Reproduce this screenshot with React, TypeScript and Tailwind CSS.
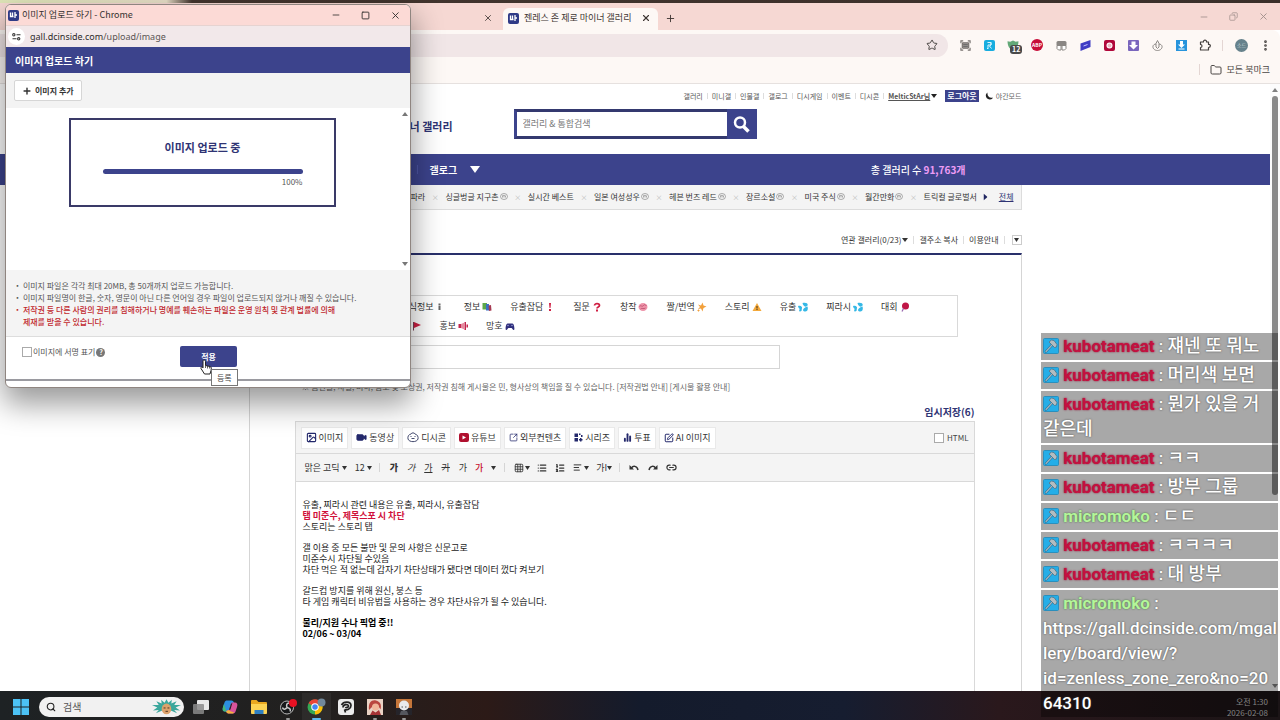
import type { ReactNode } from 'react';
import {
  ChartNoAxesColumn,
  Copy,
  EllipsisVertical,
  Folder,
  Grid3x3,
  Image as ImageIcon,
  Link2,
  List,
  ListOrdered,
  Minus,
  Plus,
  Search,
  Square,
  SquareArrowOutUpRight,
  SquarePen,
  Star,
  TextAlignStart,
  Video,
  X,
} from 'lucide-react';

type EmojiName =
  | 'info'
  | 'books'
  | 'exclaim'
  | 'question'
  | 'brain'
  | 'sparkles'
  | 'warning'
  | 'drops'
  | 'paddle'
  | 'flag'
  | 'megaphone'
  | 'gamepad';

const UTIL_LINKS = ['갤러리', '미니갤', '인물갤', '갤로그', '디시게임', '이벤트', '디시콘'];

const RECENT = [
  { name: '싱글벙글 지구촌', minor: true },
  { name: '실시간 베스트', minor: false },
  { name: '일본 여성성우', minor: true },
  { name: '헤븐 번즈 레드', minor: true },
  { name: '장르소설', minor: true },
  { name: '미국 주식', minor: true },
  { name: '월간만화', minor: true },
];

const CATEGORIES: { label: string; icon: EmojiName }[] = [
  { label: '소식정보', icon: 'info' },
  { label: '정보', icon: 'books' },
  { label: '유출잡담', icon: 'exclaim' },
  { label: '질문', icon: 'question' },
  { label: '창작', icon: 'brain' },
  { label: '짤/번역', icon: 'sparkles' },
  { label: '스토리', icon: 'warning' },
  { label: '유출', icon: 'drops' },
  { label: '찌라시', icon: 'drops' },
  { label: '대회', icon: 'paddle' },
];

const CHAT = [
  { user: 'kubotameat', text: '쟤넨 또 뭐노' },
  { user: 'kubotameat', text: '머리색 보면' },
  { user: 'kubotameat', text: '뭔가 있을 거 같은데' },
  { user: 'kubotameat', text: 'ㅋㅋ' },
  { user: 'kubotameat', text: '방부 그룹' },
  { user: 'micromoko', text: 'ㄷㄷ' },
  { user: 'kubotameat', text: 'ㅋㅋㅋㅋ' },
  { user: 'kubotameat', text: '대 방부' },
  { user: 'micromoko', text: 'https://gall.dcinside.com/mgallery/board/view/?id=zenless_zone_zero&no=20\n64310' },
];

function Caret({ className = 'w-[5px] h-[4px]' }: { className?: string }) {
  return (
    <svg viewBox="0 0 10 7" preserveAspectRatio="none" className={`shrink-0 ${className}`}>
      <path d="M0 0h10L5 7z" fill="currentColor" />
    </svg>
  );
}

function Favicon() {
  return (
    <svg viewBox="0 0 22 22" className="w-[11px] h-[11px] shrink-0">
      <rect width="22" height="22" rx="4" fill="#2f3a86" />
      <path d="M5 5v8h6M9 5v9M14 4v12M14 10h4" fill="none" stroke="#fff" strokeWidth="2.6" />
    </svg>
  );
}

function Emoji({ name }: { name: EmojiName }) {
  const shapes: Record<EmojiName, ReactNode> = {
    info: <path d="M5 7h4v9H5zM5 3h4v3H5z" fill="#666" />,
    books: (
      <>
        <rect x="1" y="2" width="9" height="13" fill="#5da84a" />
        <rect x="8" y="4" width="6" height="13" fill="#3b6fc4" />
        <path d="M13 7l5-1 1 11-5 1z" fill="#a63a52" />
      </>
    ),
    exclaim: <path d="M8 2h4l-1 10H9zM8 14h4v4H8z" fill="#cf1f43" />,
    question: (
      <>
        <path d="M5 7c0-5 10-5 10 0 0 3-5 3-5 6" fill="none" stroke="#cf1f43" strokeWidth="3.4" />
        <path d="M8 15h4v4H8z" fill="#cf1f43" />
      </>
    ),
    brain: (
      <>
        <ellipse cx="10" cy="10" rx="9" ry="8" fill="#ee93a9" />
        <path d="M3 9c3-4 5 2 8-2s4 1 6 0M5 14c3-3 6 1 10-2" fill="none" stroke="#b94a68" strokeWidth="1.6" />
      </>
    ),
    sparkles: (
      <path d="M11 1l2 6 6 2-6 3-2 7-3-6-6 1 4-4-4-5 6 2zM3 14l1 2 2 1-2 1-1 2-1-2-2-1 2-1z" fill="#f2a03c" />
    ),
    warning: (
      <>
        <path d="M10 2l9 16H1z" fill="#f3a93b" />
        <path d="M9 8h2v5H9zM9 14h2v2H9z" fill="#43301a" />
      </>
    ),
    drops: (
      <g fill="#35b8e6">
        <path d="M9 2c7-2 12 1 10 5s-8 3-10-5z" />
        <path d="M0 8c6-2 9 2 8 5s-7 2-8-5z" />
        <path d="M19 9c2 7-1 11-6 10s-4-7 6-10z" />
        <path d="M3 19c-2-4 0-5 3-5s2 5-3 5z" />
      </g>
    ),
    paddle: (
      <>
        <circle cx="11" cy="8" r="7" fill="#c01646" />
        <path d="M7 13l-3 6" stroke="#9b6ab1" strokeWidth="2.6" />
      </>
    ),
    flag: (
      <>
        <path d="M3 2v17" stroke="#7a3d52" strokeWidth="2" />
        <path d="M4 2l14 6-14 6z" fill="#cf1f43" />
      </>
    ),
    megaphone: (
      <>
        <path d="M1 6h5v8H1zM13 2h3v16h-3z" fill="#c2274e" />
        <path d="M6 6l7-3v14l-7-3z" fill="#e58a9f" />
        <path d="M17 7h3v6h-3z" fill="#c2274e" />
      </>
    ),
    gamepad: (
      <>
        <path d="M5 5h10c3 0 5 12 3 13s-4-4-5-4H7c-1 0-3 5-5 4S2 5 5 5z" fill="#2f2f7d" />
        <circle cx="6" cy="9" r="1.5" fill="#9aa0d8" />
        <circle cx="14" cy="9" r="1.5" fill="#9aa0d8" />
      </>
    ),
  };
  return (
    <svg viewBox="0 0 20 20" className="w-[10px] h-[10px] shrink-0">
      {shapes[name]}
    </svg>
  );
}

function ExtensionIcons() {
  return (
    <div className="flex items-center text-[#4a4644]">
      <span className="flex w-6 justify-center">
        <svg viewBox="0 0 24 24" className="w-[11px] h-[11px]" fill="none" stroke="#77726f" strokeWidth="2.5">
          <path d="M2 7V2h5M17 2h5v5M22 17v5h-5M7 22H2v-5" />
          <rect x="5" y="6" width="14" height="12" rx="2" fill="#9a9693" />
          <path d="M7 10h10M7 14h10" stroke="#666" strokeWidth="2" />
        </svg>
      </span>
      <span className="flex w-6 justify-center">
        <svg viewBox="0 0 22 22" className="w-[11px] h-[11px]">
          <rect width="22" height="22" rx="4" fill="#18addf" />
          <path d="M7 5h7v5H8v6M14 5v5l-3 2 4 5M6 17h3" fill="none" stroke="#d9f5ff" strokeWidth="2" />
        </svg>
      </span>
      <span className="relative flex w-6 justify-center">
        <svg viewBox="0 0 22 20" className="w-[12px] h-[11px]">
          <path d="M1 2l5 1 5-2 5 2 5-1c0 8-3 14-10 17C4 16 1 10 1 2z" fill="#63a878" />
        </svg>
        <span className="absolute left-[9px] top-[5px] rounded-[3px] bg-[#4a4a4a] px-[2px] text-[7px] leading-[9px] font-bold text-white">
          12
        </span>
      </span>
      <span className="flex w-6 justify-center">
        <span className="flex w-[12px] h-[12px] items-center justify-center rounded-full bg-[#c70d38] text-[5px] font-bold text-white">
          ABP
        </span>
      </span>
      <span className="flex w-6 justify-center">
        <svg viewBox="0 0 22 22" className="w-[11px] h-[11px]">
          <rect x="1" y="2" width="20" height="10" rx="3" fill="#8a8683" />
          <path d="M2 11h8v9H5l-3-3zM12 11h8v6l-3 3h-5z" fill="#fff" stroke="#8a8683" strokeWidth="2" />
        </svg>
      </span>
      <span className="flex w-6 justify-center">
        <svg viewBox="0 0 22 22" className="w-[11px] h-[11px]">
          <path d="M1 7L21 0v14L1 22z" fill="#3f3cc4" />
          <path d="M7 12l8-3" stroke="#c9c8ff" strokeWidth="2" />
        </svg>
      </span>
      <span className="flex w-6 justify-center">
        <svg viewBox="0 0 22 22" className="w-[11px] h-[11px]">
          <rect width="22" height="22" rx="4" fill="#b0083a" />
          <circle cx="11" cy="11" r="6" fill="#fff" />
          <circle cx="11" cy="11" r="4" fill="#f0b6c4" />
        </svg>
      </span>
      <span className="flex w-6 justify-center">
        <svg viewBox="0 0 22 22" className="w-[11px] h-[11px]">
          <rect width="22" height="22" rx="2" fill="#7a66bd" />
          <path d="M7 3h8v7h5l-9 9-9-9h5z" fill="#fff" />
        </svg>
      </span>
      <span className="flex w-6 justify-center">
        <svg viewBox="0 0 22 22" className="w-[11px] h-[11px]" fill="none" stroke="#8c8885" strokeWidth="2">
          <path d="M11 1l3 6M11 1L8 7v7l3 3 3-3V7M8 8c-10 1-7 13 3 13S24 9 14 8" />
        </svg>
      </span>
      <span className="flex w-6 justify-center">
        <svg viewBox="0 0 22 22" className="w-[11px] h-[11px]">
          <rect width="22" height="22" fill="#2794dc" />
          <path d="M8 2h6v7h4l-7 7-7-7h4zM5 17h12v2H5z" fill="#fff" />
        </svg>
      </span>
      <span className="flex w-6 justify-center">
        <svg viewBox="0 0 24 24" className="w-[12px] h-[12px]" fill="none" stroke="#45413f" strokeWidth="2.4">
          <path d="M3 6h6c-1-5 7-5 6 0h4v5c5-1 5 6 0 6v5H3v-5c4 0 4-6 0-6z" strokeLinejoin="round" />
        </svg>
      </span>
      <span className="mx-[5px] h-[11px] w-px bg-[#e4d6d3]" />
      <span className="ml-[7px] flex w-[13px] h-[13px] items-center justify-center rounded-full bg-[#66828c] text-[5px] text-[#c9d8dd]">
        소드
      </span>
      <span className="ml-[11px] mr-2">
        <EllipsisVertical className="w-[13px] h-[13px]" strokeWidth={3} />
      </span>
    </div>
  );
}

function BrowserChrome() {
  return (
    <header className="shrink-0">
      <div className="h-[3px] bg-[linear-gradient(90deg,#dfe6b8_0%,#e8dfc8_13%,#43352e_15%,#3a2f2a_100%)]" />
      <div className="flex h-[27px] items-end bg-[#f6d8d3] text-[#3d3532]">
        <div className="flex h-[22px] w-[503px] items-center justify-end pr-[10px] pb-[2px]">
          <X className="w-[10px] h-[10px]" />
        </div>
        <div className="flex h-[22px] w-[155px] items-center rounded-t-[6px] bg-[#fdf8f5] pl-[5px] pr-[7px] pb-[2px]">
          <Favicon />
          <span className="ml-[5px] flex-1 whitespace-nowrap text-[9px]">젠레스 존 제로 마이너 갤러리</span>
          <X className="w-[10px] h-[10px]" strokeWidth={2.6} />
        </div>
        <div className="flex h-[22px] flex-1 items-center pl-[7px] pb-[2px]">
          <Plus className="w-[11px] h-[11px]" />
        </div>
        <div className="flex h-[27px] items-center gap-[20px] pr-[11px] text-[#a08f8b]">
          <Minus className="w-[10px] h-[10px]" />
          <Copy className="w-[9px] h-[9px] -scale-x-100" />
          <X className="w-[11px] h-[11px]" />
        </div>
      </div>
      <div className="flex h-[30px] items-center rounded-tr-[8px] bg-[#fdf8f5]">
        <div className="mr-[5px] flex h-[23px] flex-1 items-center justify-end rounded-r-full bg-[#f1e6e7] pr-[10px]">
          <Star className="w-[12px] h-[12px] text-[#4a4644]" />
        </div>
        <ExtensionIcons />
      </div>
      <div className="flex h-[24px] items-center justify-end border-b border-[#e6e1df] bg-[#fdf8f5] pr-[10px] pb-1 text-[9px] text-[#4a4644]">
        <span className="mr-[10px] h-[11px] w-px bg-[#e4d6d3]" />
        <button className="flex items-center gap-[5px]">
          <Folder className="w-[12px] h-[12px]" />
          모든 북마크
        </button>
      </div>
    </header>
  );
}

function MinorBadge() {
  return (
    <svg viewBox="0 0 16 14" className="mb-[2px] ml-px w-[8px] h-[7px] shrink-0" fill="none" stroke="#888" strokeWidth="1.4">
      <ellipse cx="8" cy="7" rx="7" ry="6" />
      <path d="M5 9V5M5 6c1-2 3-1 3 0v3M8 6c1-2 3-1 3 0v3" />
    </svg>
  );
}

function SiteHeader() {
  return (
    <div className="mx-auto w-full max-w-[773px]">
      <div className="flex h-6 items-center justify-end text-[7px] text-[#555]">
        {UTIL_LINKS.map((link) => (
          <span key={link} className="flex items-center">
            <a href="#">{link}</a>
            <span className="mx-[4px] h-[6px] w-px bg-[#ddd]" />
          </span>
        ))}
        <a href="#" className="font-bold underline">
          MelticStAr님
        </a>
        <Caret className="ml-px w-[6px] h-[4px] text-[#222]" />
        <button className="ml-[8px] h-[12px] bg-[#3c438c] px-[2px] text-[8px] leading-[12px] font-bold text-white">
          로그아웃
        </button>
        <button className="ml-[6px] flex items-center gap-[3px] text-[#666]">
          <svg viewBox="0 0 16 16" className="w-[8px] h-[8px]">
            <path d="M5 1C-2 6 3 16 10 15c3 0 5-2 6-4C9 13 4 8 5 1z" fill="#222" />
          </svg>
          야간모드
        </button>
      </div>
      <div className="flex h-[46px] items-start pt-px">
        <h1 className="w-[204px] pt-[9px] text-right text-[11px] leading-4 font-bold text-[#2f3474]">마이너 갤러리</h1>
        <form className="ml-[61px] flex h-[30px] w-[243px] border-[3px] border-r-0 border-[#3c438c] border-y-[#34396f]">
          <input
            type="search"
            aria-label="갤러리 & 통합검색"
            placeholder="갤러리 & 통합검색"
            className="min-w-0 flex-1 bg-white px-[6px] text-[9px] placeholder:text-[#777] outline-none"
          />
          <button type="button" aria-label="검색" className="-my-[3px] flex w-[30px] items-center justify-center bg-[#3c438c]">
            <svg viewBox="0 0 34 34" className="w-[17px] h-[17px]" fill="none" stroke="#fff">
              <circle cx="14" cy="13" r="10" strokeWidth="5" />
              <path d="M21 21l10 10" strokeWidth="7" />
            </svg>
          </button>
        </form>
      </div>
    </div>
  );
}

function SiteNav() {
  return (
    <>
      <nav className="bg-[#3c438c]">
        <div className="mx-auto flex h-[31px] max-w-[773px] items-center text-[10px] font-bold text-white">
          <span className="ml-[168px] h-[9px] w-px bg-[#4d56a3]" />
          <a href="#" className="ml-[12px]">
            갤로그
          </a>
          <Caret className="ml-[13px] w-[10px] h-[7px]" />
          <p className="ml-auto mr-[56px] font-medium">
            총 갤러리 수 <strong className="text-[#ee9cf5]">91,763개</strong>
          </p>
        </div>
      </nav>
      <div className="mx-auto flex h-[25px] w-full max-w-[773px] items-center border border-t-0 border-[#dcdcdc] bg-[#f4f4f4] pl-[161px] pr-[7px] text-[8px] text-[#333]">
        <div className="flex min-w-0 flex-1 items-center justify-between whitespace-nowrap">
          <a href="#">파라</a>
          {RECENT.map((g) => (
            <span key={g.name} className="contents">
              <span className="text-[7px] text-[#bbb]">×</span>
              <a href="#" className="flex items-center">
                {g.name}
                {g.minor && <MinorBadge />}
              </a>
            </span>
          ))}
          <span className="text-[7px] text-[#bbb]">×</span>
          <a href="#" className="w-[53px] overflow-hidden">
            트릭컬 글로벌서버
          </a>
        </div>
        <Caret className="ml-[5px] w-[7px] h-[4px] -rotate-90 text-[#1f2560]" />
        <a href="#" className="ml-[10px] text-[#2f3474] underline">
          전체
        </a>
      </div>
    </>
  );
}

function MediaButton({ icon, children }: { icon: ReactNode; children: ReactNode }) {
  return (
    <button className="flex h-[22px] items-center gap-[2px] border border-[#e9e9e9] bg-white px-[4px] text-[#333]">
      <span className="text-[#23286b]">{icon}</span>
      {children}
    </button>
  );
}

function Divider() {
  return <span className="h-[9px] w-px bg-[#d5d5d5]" />;
}

function Editor() {
  return (
    <div className="flex flex-1 flex-col border border-b-0 border-[#d9d9d9] text-[9px]">
      <div className="flex h-[32px] items-center gap-[3px] border-b border-[#d9d9d9] bg-[#f4f4f4] px-[5px]">
        <MediaButton
          icon={
            <ImageIcon className="w-[11px] h-[11px]" strokeWidth={2.4} />
          }
        >
          이미지
        </MediaButton>
        <MediaButton icon={<Video className="w-[11px] h-[11px]" fill="currentColor" />}>동영상</MediaButton>
        <MediaButton
          icon={
            <svg viewBox="0 0 24 22" className="w-[12px] h-[11px]" fill="none" stroke="#444a6e" strokeWidth="2">
              <path d="M8 4c1-3 7-3 8 0 5 1 7 6 6 10-2 7-18 7-20 0C1 9 3 5 8 4z" />
              <path d="M7 9h2M15 9h2M9 13h6" />
            </svg>
          }
        >
          디시콘
        </MediaButton>
        <MediaButton
          icon={
            <svg viewBox="0 0 20 18" className="w-[10px] h-[9px]">
              <rect width="20" height="18" rx="4" fill="#b0102f" />
              <path d="M7 5l7 4-7 4z" fill="#fff" />
            </svg>
          }
        >
          유튜브
        </MediaButton>
        <MediaButton icon={<SquareArrowOutUpRight className="w-[9px] h-[9px]" />}>외부컨텐츠</MediaButton>
        <MediaButton
          icon={
            <svg viewBox="0 0 18 18" className="w-[9px] h-[9px]" fill="currentColor">
              <path d="M1 1h7v7H1zM1 10h7v7H1zM10 1h3v3h-3zM14 4h3v4h-3zM12 10h3v7h-3zM10 12h7v3h-7z" />
            </svg>
          }
        >
          시리즈
        </MediaButton>
        <MediaButton icon={<ChartNoAxesColumn className="w-[9px] h-[9px]" strokeWidth={5} />}>투표</MediaButton>
        <MediaButton icon={<SquarePen className="w-[10px] h-[10px]" strokeWidth={2.4} />}>AI 이미지</MediaButton>
        <label className="ml-auto flex items-center gap-[3px] text-[8px] text-[#444]">
          <input type="checkbox" className="h-[10px] w-[10px] appearance-none border border-[#aaa] bg-white" />
          HTML
        </label>
      </div>
      <div className="flex h-[28px] items-center border-b border-[#d9d9d9] bg-[#f4f4f4] pl-[9px] text-[#333]">
        <button className="flex items-center gap-[2px]">
          맑은 고딕 <Caret />
        </button>
        <button className="ml-[8px] mr-[7px] flex items-center gap-[2px]">
          12 <Caret />
        </button>
        <Divider />
        <button className="ml-[10px] font-black">가</button>
        <button className="ml-[9px] italic">가</button>
        <button className="ml-[9px] underline">가</button>
        <button className="ml-[9px] line-through">가</button>
        <button className="ml-[9px]">가</button>
        <button className="ml-[8px] mr-[8px] font-medium text-[#c8102e]">가</button>
        <Caret />
        <span className="w-[8px]" />
        <Divider />
        <button aria-label="표" className="ml-[9px] flex items-center gap-px">
          <Grid3x3 className="w-[10px] h-[10px]" /> <Caret />
        </button>
        <button aria-label="목록" className="ml-[7px]">
          <List className="w-[10px] h-[10px]" strokeWidth={3} />
        </button>
        <button aria-label="번호 목록" className="ml-[8px]">
          <ListOrdered className="w-[10px] h-[10px]" strokeWidth={3} />
        </button>
        <button aria-label="정렬" className="ml-[8px] flex items-center gap-[2px]">
          <TextAlignStart className="w-[9px] h-[9px]" strokeWidth={2.6} /> <Caret />
        </button>
        <button className="ml-[7px] mr-[7px] flex items-center">
          가I
          <Caret />
        </button>
        <Divider />
        <button aria-label="실행 취소" className="ml-[9px]">
          <svg viewBox="0 0 20 16" className="w-[10px] h-[8px]">
            <path d="M1 2v9h9z" fill="#333" />
            <path d="M5 8c3-5 11-5 13 4" fill="none" stroke="#333" strokeWidth="3" />
          </svg>
        </button>
        <button aria-label="다시 실행" className="ml-[9px]">
          <svg viewBox="0 0 20 16" className="w-[10px] h-[8px] -scale-x-100">
            <path d="M1 2v9h9z" fill="#333" />
            <path d="M5 8c3-5 11-5 13 4" fill="none" stroke="#333" strokeWidth="3" />
          </svg>
        </button>
        <button aria-label="링크" className="ml-[8px]">
          <Link2 className="w-[11px] h-[11px]" strokeWidth={2.6} />
        </button>
      </div>
      <div className="flex flex-col gap-[10px] px-[7px] pt-[17px] leading-[11px] text-[#222]">
        <p>
          유출, 찌라시 관련 내용은 유출, 찌라시, 유출잡담
          <br />
          <strong className="text-[#d0103a]">탭 미준수, 제목스포 시 차단</strong>
          <br />
          스토리는 스토리 탭
        </p>
        <p>
          갤 이용 중 모든 불만 및 문의 사항은 신문고로
          <br />
          미준수시 차단될 수있음
          <br />
          차단 먹은 적 없는데 갑자기 차단상태가 됐다면 데이터 껐다 켜보기
        </p>
        <p>
          갈드컵 방지를 위해 원신, 붕스 등
          <br />
          타 게임 캐릭터 비유법을 사용하는 경우 차단사유가 될 수 있습니다.
        </p>
        <p className="font-bold text-black">
          물리/지원 수나 픽업 중!!
          <br />
          02/06 ~ 03/04
        </p>
      </div>
    </div>
  );
}

function GalleryPage() {
  return (
    <div className="flex min-h-0 flex-1 flex-col overflow-hidden bg-white">
      <SiteHeader />
      <SiteNav />
      <main className="mx-auto flex w-full max-w-[773px] flex-1 flex-col">
        <div className="flex h-[43px] items-end justify-end pb-[5px] text-[8px] text-[#333]">
          <div className="flex h-4 items-center gap-[5px]">
            <button className="flex items-center gap-px">
              연관 갤러리(0/23) <Caret className="w-[6px] h-[4px]" />
            </button>
            <span className="h-[8px] w-px bg-[#ddd]" />
            <button>갤주소 복사</button>
            <span className="h-[8px] w-px bg-[#ddd]" />
            <a href="#">이용안내</a>
            <span className="h-[8px] w-px bg-[#ddd]" />
            <button aria-label="펼치기" className="ml-[2px] flex h-[10px] w-[10px] items-center justify-center border border-[#ccc]">
              <Caret />
            </button>
          </div>
        </div>
        <section className="flex flex-1 flex-col border-x border-t-2 border-[#d5d5d5] border-t-[#29306b] pt-10 pl-[45px] pr-[46px]">
          <div className="h-[42px] w-[663px] border border-[#d9d9d9] pt-px text-[9px] text-[#333]">
            <div className="flex h-[19px] items-center gap-[18px] pl-[105px]">
              {CATEGORIES.map((c) => (
                <button key={c.label} className="flex items-center gap-[2px]">
                  {c.label}
                  <Emoji name={c.icon} />
                </button>
              ))}
            </div>
            <div className="flex h-[19px] items-center gap-[18px] pl-[116px]">
              <Emoji name="flag" />
              <button className="flex items-center gap-[2px]">
                홍보
                <Emoji name="megaphone" />
              </button>
              <button className="flex items-center gap-[2px]">
                망호
                <Emoji name="gamepad" />
              </button>
            </div>
          </div>
          <input type="text" aria-label="제목" className="mt-2 h-6 w-[485px] border border-[#d5d5d5] px-2 text-[9px]" />
          <p className="mt-[10px] pl-[7px] text-[8px] leading-4 whitespace-nowrap text-[#666]">
            ※ 음란물, 차별, 비하, 혐오 및 초상권, 저작권 침해 게시물은 민, 형사상의 책임을 질 수 있습니다. [저작권법 안내] [게시물 활용 안내]
          </p>
          <button className="mt-2 h-[18px] self-end text-[10px] leading-[18px] font-bold text-[#2f3474]">임시저장(6)</button>
          <Editor />
        </section>
      </main>
    </div>
  );
}

function UploadPopup() {
  return (
    <div className="absolute top-[4px] left-[5px] w-[406px] overflow-hidden rounded-[6px] border border-[#8f8580] bg-white shadow-[0_14px_30px_2px_rgba(0,0,0,0.4)]">
      <div className="flex h-[20px] items-center bg-[#fcdad6] pl-[2px] text-[9px] text-[#33302f]">
        <Favicon />
        <span className="ml-[3px] flex-1">이미지 업로드 하기 - Chrome</span>
        <div className="flex items-center gap-[20px] pr-[9px]">
          <Minus className="w-[10px] h-[10px]" />
          <Square className="w-[9px] h-[9px]" strokeWidth={2.4} />
          <X className="w-[11px] h-[11px]" />
        </div>
      </div>
      <div className="flex h-[22px] items-center border-t border-[#e6d3d1] bg-[#f2e8ea] pl-[2px] text-[#5b5554]">
        <span className="flex h-[17px] w-[17px] items-center justify-center rounded-full bg-white">
          <svg viewBox="0 0 20 18" className="w-[9px] h-[8px]" fill="none" stroke="#333" strokeWidth="2.4">
            <circle cx="4" cy="4" r="2.6" />
            <path d="M10 4h9M1 13h9" />
            <circle cx="15" cy="13" r="2.6" />
          </svg>
        </span>
        <span className="ml-[5px] font-['Noto_Sans'] text-[9px]">
          <span className="text-[#2d2a29]">gall.dcinside.com</span>/upload/image
        </span>
      </div>
      <h2 className="flex h-[26px] items-center bg-[#3c438c] pl-[9px] text-[10px] font-bold text-white">이미지 업로드 하기</h2>
      <div className="flex h-[35px] items-center bg-[#f3f3f3] pl-[8px]">
        <button className="flex h-[21px] items-center gap-[3px] rounded-[2px] border border-[#d6d6d6] bg-white px-[7px] text-[8px] font-bold text-[#333]">
          <Plus className="w-[10px] h-[10px]" strokeWidth={3.4} />
          이미지 추가
        </button>
      </div>
      <div className="flex h-[162px]">
        <div className="flex-1 pt-[10px] pl-[63px]">
          <div className="flex h-[89px] w-[267px] flex-col items-center border-2 border-[#3a3a68] pt-[19px]">
            <p className="text-[11px] leading-4 font-bold text-[#2f3474]">이미지 업로드 중</p>
            <div className="mt-[14px] h-[5px] w-[200px] rounded-full bg-[#3c438c]" />
            <p className="mt-[2px] w-[200px] text-right text-[8px] leading-3 text-[#555]">100%</p>
          </div>
        </div>
        <div className="flex w-[10px] flex-col items-center justify-between py-[4px] text-[#777]">
          <Caret className="w-[6px] h-[4px] rotate-180" />
          <Caret className="w-[6px] h-[4px]" />
        </div>
      </div>
      <ul className="h-[67px] list-none border-b border-[#ddd] bg-[#f4f4f4] pt-[10px] pl-[9px] text-[8px] leading-3 text-[#555]">
        <li className="flex gap-[3px]">
          <span className="font-black">·</span>이미지 파일은 각각 최대 20MB, 총 50개까지 업로드 가능합니다.
        </li>
        <li className="flex gap-[3px]">
          <span className="font-black">·</span>이미지 파일명이 한글, 숫자, 영문이 아닌 다른 언어일 경우 파일이 업로드되지 않거나 깨질 수 있습니다.
        </li>
        <li className="flex gap-[3px] font-medium text-[#c0272d]">
          <span className="font-black">·</span>
          <span>
            저작권 등 다른 사람의 권리를 침해하거나 명예를 훼손하는 파일은 운영 원칙 및 관계 법률에 의해
            <br />
            제재를 받을 수 있습니다.
          </span>
        </li>
      </ul>
      <div className="relative h-[44px] border-b-2 border-[#9a9aa0]">
        <div className="grid grid-cols-[174px_57px_1fr] pt-[9px]">
          <label className="flex h-3 items-center gap-px pl-[16px] text-[8px] text-[#555]">
            <input type="checkbox" className="h-[10px] w-[10px] appearance-none border border-[#aaa] bg-white" />
            이미지에 서명 표기
            <span className="flex h-[9px] w-[9px] items-center justify-center rounded-full bg-[#777] text-[7px] font-bold text-white">
              ?
            </span>
          </label>
          <button className="h-[21px] rounded-[2px] bg-[#3c438c] text-[8px] font-bold text-white">적용</button>
        </div>
        {/* pointer + native tooltip */}
        <svg viewBox="0 0 24 32" className="absolute left-[194px] top-[22px] w-[12px] h-[16px]">
          <path
            d="M8 2c2 0 3 1 3 3v8l9 2c3 1 3 3 2 8l-2 7H9L2 19c-1-3 2-4 4-1V5c0-2 1-3 2-3z"
            fill="#fff"
            stroke="#222"
            strokeWidth="2"
          />
          <path d="M11 13v5M15 14v5M19 15v4" stroke="#222" strokeWidth="1.4" />
        </svg>
        <span className="absolute left-[205px] top-[32px] z-10 h-[17px] border border-[#777] bg-white px-[5px] text-[8px] leading-[15px] text-[#444]">
          등록
        </span>
      </div>
      <div className="h-[6px]" />
    </div>
  );
}

function HammerBadge() {
  return (
    <svg viewBox="0 0 32 32" className="inline-block h-[16px] w-[16px] align-[-2px]">
      <rect x="1" y="1" width="30" height="30" rx="2" fill="#25aee8" stroke="#2a8fbd" strokeWidth="2" />
      <path d="M6 27L18 14" stroke="#2f6f90" strokeWidth="5" strokeLinecap="round" />
      <path d="M6 27L18 14" stroke="#9fb6c2" strokeWidth="2.4" strokeLinecap="round" />
      <path d="M12 8l5-4 5 1 6 8-1 5-4 1z" fill="#b3bcc0" stroke="#4d7186" strokeWidth="1.6" />
    </svg>
  );
}

function ChatOverlay() {
  return (
    <ul className="absolute top-[333px] right-[2px] flex w-[237px] list-none flex-col gap-[2px] font-['Roboto','Noto_Sans_CJK_KR',sans-serif] text-[17px] leading-[25px] font-medium text-white [text-shadow:0_0_2px_#444]">
      {CHAT.map((line, i) => (
        <li key={i} className="bg-black/[0.34] py-px pl-[2px] wrap-break-word whitespace-pre-line">
          <HammerBadge />{' '}
          <span
            className={
              line.user === 'micromoko'
                ? 'font-bold text-[#b4f59a] [text-shadow:0_0_2px_#3f6b35]'
                : 'font-bold text-[#c4103f] [text-shadow:0_0_2px_#8c0c30]'
            }
          >
            {line.user}
          </span>{' '}
          : <span className={line.text.startsWith('http') ? '' : 'text-[18px] leading-none'}>{line.text}</span>
        </li>
      ))}
    </ul>
  );
}

function TaskIcon({ children, active, running }: { children: ReactNode; active?: boolean; running?: boolean }) {
  return (
    <span className={`relative flex h-full w-[29px] items-center justify-center ${active ? 'bg-white/5' : ''}`}>
      {children}
      {active && <span className="absolute bottom-0 h-[2px] w-[9px] rounded-full bg-[#5bb8ee]" />}
      {running && <span className="absolute bottom-0 h-[2px] w-[4px] rounded-full bg-[#999]" />}
    </span>
  );
}

function Taskbar() {
  return (
    <footer className="flex h-[29px] shrink-0 items-center bg-[linear-gradient(90deg,#1e2224_0%,#22201f_25%,#2c1a17_38%,#141b2c_50%,#161d30_66%,#2a181c_78%,#1b1416_100%)] pt-[2px] pl-[13px]">
      <svg viewBox="0 0 32 32" className="w-[16px] h-[16px]">
        <path d="M0 0h15v15H0zM17 0h15v15H17zM0 17h15v15H0zM17 17h15v15H17z" fill="#4cc2f5" />
      </svg>
      <label className="ml-[10px] flex h-[20px] w-[145px] items-center rounded-full bg-[#f1f1f1] pl-[7px] pr-[3px]">
        <Search className="w-[10px] h-[10px] text-[#222]" strokeWidth={2.6} />
        <input type="text" placeholder="검색" className="ml-[7px] w-0 flex-1 text-[10px] placeholder:text-[#555] outline-none" />
        <svg viewBox="0 0 60 32" className="w-[29px] h-[16px]">
          <path
            d="M30 0l4 7 7-6-1 8 11-5-5 8 14 0-11 5 9 6-12-1 6 7-12-5-20 0-12 5 6-7-12 1 9-6L0 12h14L9 4l11 5-1-8 7 6z"
            fill="#3aa79c"
          />
          <ellipse cx="30" cy="20" rx="10" ry="11" fill="#dca26c" />
          <path d="M24 18h4M32 18h4M28 25h5" stroke="#4d3420" strokeWidth="2" />
        </svg>
      </label>
      <div className="ml-[2px] flex h-full items-center">
        <TaskIcon>
          <svg viewBox="0 0 32 28" className="w-[16px] h-[14px]">
            <rect x="8" y="0" width="24" height="20" rx="2" fill="#e8e8e8" />
            <rect x="0" y="8" width="22" height="20" rx="2" fill="#8a8a8a" fillOpacity="0.85" />
          </svg>
        </TaskIcon>
        <TaskIcon>
          <svg viewBox="0 0 32 32" className="w-[16px] h-[16px]">
            <path d="M10 3h9c3 0 4 2 5 5l-6 2-5 15H6C2 25 0 22 2 16l3-9c1-3 3-4 5-4z" fill="#2c8fe0" />
            <path d="M22 29h-9c-3 0-4-2-5-5l6-2 5-15h7c4 0 6 3 4 9l-3 9c-1 3-3 4-5 4z" fill="#d9539b" />
            <path d="M22 29h-9c-3 0-4-2-5-5l6-2c2 3 6 4 10 4z" fill="#f2b33d" />
            <path d="M4 10l-2 6c-2 6 0 9 4 9h3z" fill="#46b878" />
            <path d="M14 22l4-12 3-3-4 14z" fill="#22252a" />
          </svg>
        </TaskIcon>
        <TaskIcon>
          <svg viewBox="0 0 32 28" className="w-[16px] h-[14px]">
            <path d="M0 2c0-1 1-2 2-2h9l4 4h15c1 0 2 1 2 2v20H0z" fill="#e9a820" />
            <path d="M0 8h32v18c0 1-1 2-2 2H2c-1 0-2-1-2-2z" fill="#fcd354" />
            <path d="M7 20h18v8H7z" fill="#2e7fc2" />
          </svg>
        </TaskIcon>
        <TaskIcon running>
          <svg viewBox="0 0 36 32" className="w-[18px] h-[16px]">
            <circle cx="16" cy="17" r="13" fill="#17181a" stroke="#b9b9b9" strokeWidth="2" />
            <path d="M16 17c-2-6 0-9 4-9M16 17c6 1 8 4 6 8M16 17c-4 5-8 4-9 0" fill="none" stroke="#ccc" strokeWidth="3" />
            <circle cx="28" cy="8" r="8" fill="#e81123" />
          </svg>
        </TaskIcon>
        <TaskIcon active>
          <svg viewBox="0 0 38 34" className="w-[19px] h-[17px]">
            <circle cx="16" cy="18" r="15" fill="#34a853" />
            <path d="M16 18L3 10.500C9 0 23 0 29 10.500z" fill="#ea4335" />
            <path d="M16 18l13-7.500c6 10-1 22.500-13 22.500z" fill="#fbbc05" />
            <circle cx="16" cy="18" r="7.500" fill="#fff" />
            <circle cx="16" cy="18" r="5.500" fill="#4285f4" />
            <circle cx="29" cy="9" r="8" fill="#71889a" />
          </svg>
        </TaskIcon>
        <TaskIcon>
          <svg viewBox="0 0 32 32" className="w-[16px] h-[16px]">
            <rect width="32" height="32" rx="6" fill="#ececec" />
            <path d="M7 12c4-8 19-8 19 1 0 7-9 10-13 8M10 17c0-6 10-8 11-3 0 3-5 4-6 2M13 21l2 6" fill="none" stroke="#222" strokeWidth="3.4" />
          </svg>
        </TaskIcon>
        <TaskIcon running>
          <svg viewBox="0 0 32 32" className="w-[16px] h-[16px]">
            <rect width="32" height="32" fill="#e9d2c4" />
            <path d="M4 22C2 6 10 1 18 3s12 8 9 18l-5-8-10 1z" fill="#b9473f" />
            <circle cx="17" cy="16" r="7" fill="#f1b79a" />
            <path d="M6 32l5-9 6 4 7-5 4 10z" fill="#a63336" />
          </svg>
        </TaskIcon>
        <TaskIcon running>
          <svg viewBox="0 0 32 32" className="w-[16px] h-[16px]">
            <rect width="32" height="32" fill="#c5763a" />
            <path d="M0 18h32v14H0z" fill="#25242a" />
            <circle cx="16" cy="13" r="10" fill="#e9eaec" />
            <path d="M11 16h3M18 16h3" stroke="#555" strokeWidth="2" />
            <path d="M10 24h12l3 8H7z" fill="#55575e" />
          </svg>
        </TaskIcon>
      </div>
      <time dateTime="2026-02-08T01:30" className="ml-auto mr-[12px] text-right text-[8px] leading-[11px] text-[#c4c4c4]">
        오전 1:30
        <br />
        2026-02-08
      </time>
    </footer>
  );
}

export default function App() {
  return (
    <div className="relative flex h-screen flex-col overflow-hidden bg-white font-['Noto_Sans_CJK_KR',sans-serif]">
      <BrowserChrome />
      <div className="flex min-h-0 flex-1">
        <GalleryPage />
        {/* scrollbar */}
        <div className="flex w-[10px] flex-col items-center bg-[#fcfcfc] pt-[4px] text-[#808080]">
          <Caret className="w-[6px] h-[4px] rotate-180" />
          <div className="mt-[4px] h-[399px] w-[6px] rounded-full bg-[#8a8a8a]" />
          <Caret className="mt-auto mb-[3px] w-[6px] h-[4px]" />
        </div>
      </div>
      <Taskbar />
      <UploadPopup />
      <ChatOverlay />
    </div>
  );
}
